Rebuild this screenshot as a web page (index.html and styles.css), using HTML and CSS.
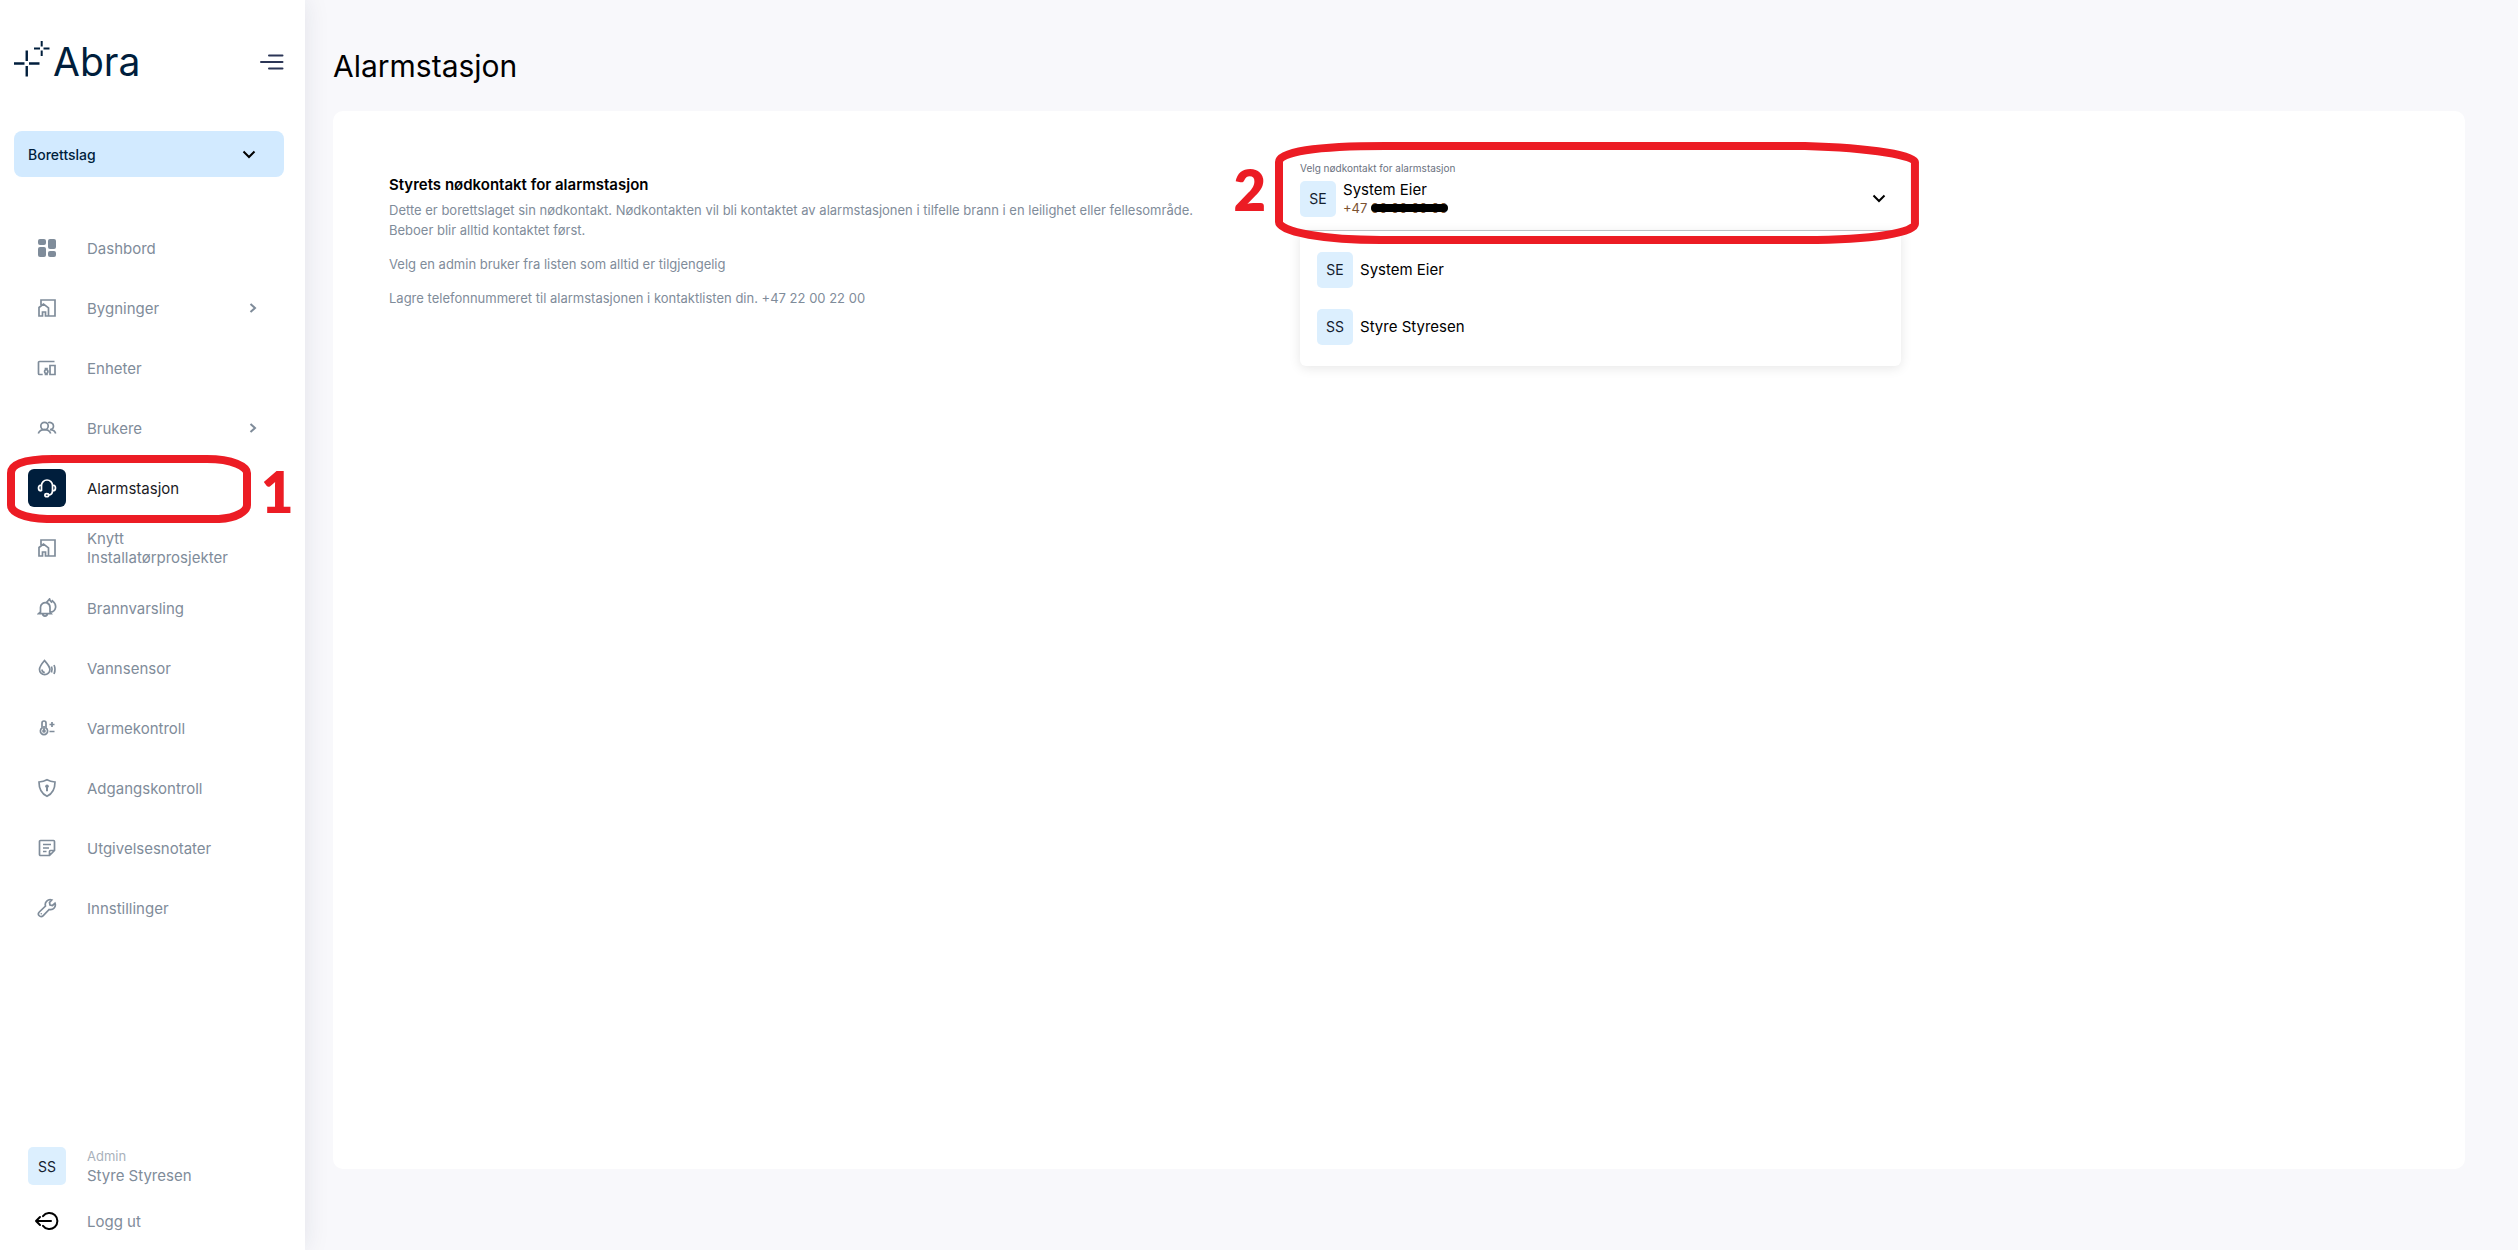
FILE: index.html
```html
<!DOCTYPE html>
<html lang="nb">
<head>
<meta charset="utf-8">
<meta name="viewport" content="width=device-width, initial-scale=1">
<title>Abra – Alarmstasjon</title>
<link rel="stylesheet" href="styles.css">
</head>
<body>
<div class="app">
  <aside class="sidebar">
    <header class="brand">
      <a class="logo" href="#">
        <svg class="logo-mark" viewBox="0 0 36 36" aria-hidden="true"><path d="M0 22.500h10.500M15 22.500h10.500M12.750 9.500v10.500M12.750 25v10.500" stroke-width="2.400"/><path d="M20 7.500h6M29.500 7.500h6M27.700 0v5.500M27.700 9.500v5.500" stroke-width="2"/></svg>
        <span class="logo-text">Abra</span>
      </a>
      <button class="menu-toggle" type="button" aria-label="Meny">
        <svg width="24" height="18" viewBox="0 0 24 18"><path d="M9 2.500h13.500M1 9h21.500M9 15.500h13.500"/></svg>
      </button>
    </header>

    <label class="org">
      <select class="org-select" aria-label="Organisasjon"><option>Borettslag</option></select>
      <svg class="org-chevron" width="14" height="9" viewBox="0 0 14 9"><path d="M1.500 1.500 7 7l5.500-5.500"/></svg>
    </label>

    <nav class="nav">
      <a class="nav-item" href="#"><span class="nav-icon"><svg viewBox="0 0 20 20"><g class="solid"><rect x="1" y="1" width="8" height="6" rx="2"/><rect x="11" y="1" width="8" height="10" rx="2"/><rect x="1" y="9" width="8" height="10" rx="2"/><rect x="11" y="13" width="8" height="6" rx="2"/></g></svg></span><span class="nav-label">Dashbord</span></a>
      <a class="nav-item" href="#"><span class="nav-icon"><svg viewBox="0 0 20 20"><path d="M4 7V2h14v16h-6.500M2 9.500 6.500 6l5 3.800V18H8.500v-4h-3v4H2z"/></svg></span><span class="nav-label">Bygninger</span><svg class="nav-chevron" viewBox="0 0 8 10"><path d="M1.500 1 6 5 1.500 9"/></svg></a>
      <a class="nav-item" href="#"><span class="nav-icon"><svg viewBox="0 0 20 20"><path d="M17.500 3.500H2.500a1 1 0 0 0-1 1v11a1 1 0 0 0 1 1h3.200M13 7.500h5v9h-5zM8.500 10.500h1.500v1.200a2.200 2.200 0 0 1 0 3.600v1.200H8.500v-1.200a2.200 2.200 0 0 1 0-3.600z"/></svg></span><span class="nav-label">Enheter</span></a>
      <a class="nav-item" href="#"><span class="nav-icon"><svg viewBox="0 0 20 20"><circle cx="7.500" cy="8" r="3.700"/><path d="M1.300 15.500c1-2.500 3-3.800 6.200-3.800s5.200 1.300 6.200 3.800M11 4.800c2.500-1 5.500.5 5.500 3.200 0 2-1.500 3.500-3.500 3.700 2.800 0 4.800 1.300 5.700 3.800"/></svg></span><span class="nav-label">Brukere</span><svg class="nav-chevron" viewBox="0 0 8 10"><path d="M1.500 1 6 5 1.500 9"/></svg></a>
      <a class="nav-item is-active" href="#" aria-current="page"><span class="nav-icon"><svg viewBox="0 0 20 20"><path d="M4.500 13V7.500a5.500 5.500 0 0 1 11 0v5c0 3-1.500 4.500-4 4.500M4.500 7C2.500 7 1.500 8.200 1.500 10s1 3 3 3M15.500 7c2 0 3 1.200 3 3s-1 3-3 3"/><ellipse cx="9.800" cy="17.200" rx="1.900" ry="1.500"/></svg></span><span class="nav-label">Alarmstasjon</span>
        <svg class="mark-ring mark-ring-nav" viewBox="0 0 244 68" preserveAspectRatio="none" aria-hidden="true"><path d="M4 18C4 10 14 4 46 4H200C226 4 240 12 240 18V50C240 56 230 63 212 64H40C16 63 4 57 4 50Z"/></svg>
        <span class="mark-number mark-number-nav">1</span></a>
      <a class="nav-item" href="#"><span class="nav-icon"><svg viewBox="0 0 20 20"><path d="M4 7V2h14v16h-6.500M2 9.500 6.500 6l5 3.800V18H8.500v-4h-3v4H2z"/></svg></span><span class="nav-label">Knytt Installatørprosjekter</span></a>
      <a class="nav-item" href="#"><span class="nav-icon"><svg viewBox="0 0 20 20"><path d="M3.500 14V9.500a4.800 4.800 0 0 1 6.500-4.600c2 .8 3 2.500 3 4.600V14l1.200 1.600H1.700zM5.700 15.800a2.300 2.300 0 0 0 4.600 0M9.500 4.500 12.500 1c.3 1.500 1 2.200 2 3l1-1.200c2.500 2 3.500 4.500 3 7-.4 2.500-2 3.800-5 4.400"/></svg></span><span class="nav-label">Brannvarsling</span></a>
      <a class="nav-item" href="#"><span class="nav-icon"><svg viewBox="0 0 20 20"><path d="M7.500 2.500C4.500 6 2.500 8.500 2.500 11.500a5.200 5.200 0 0 0 10.400 0c0-3-2.300-5.500-5.400-9zM5 11.500c0 1.700 1 2.800 2.800 3M14.500 8.500c.8 1.700.8 4 0 6M17 7c1.300 2.700 1.300 6 0 9"/></svg></span><span class="nav-label">Vannsensor</span></a>
      <a class="nav-item" href="#"><span class="nav-icon"><svg viewBox="0 0 20 20"><path d="M5 10V5a2 2 0 0 1 4 0v5a3.600 3.600 0 1 1-4 0zM7 8v4M12.500 6.500h5M15 4v5M12.500 13.500h5"/><circle cx="7" cy="13" r="1"/></svg></span><span class="nav-label">Varmekontroll</span></a>
      <a class="nav-item" href="#"><span class="nav-icon"><svg viewBox="0 0 20 20"><path d="M10 1.800c2.500 1.400 5 2 8 2.200 0 7-2 11.500-8 14.300C4 15.500 2 11 2 4c3-.2 5.500-.8 8-2.200z"/><circle class="solid" cx="10" cy="8.300" r="1.800"/><path d="M10 8.500v4.700" stroke-width="2"/></svg></span><span class="nav-label">Adgangskontroll</span></a>
      <a class="nav-item" href="#"><span class="nav-icon"><svg viewBox="0 0 20 20"><path d="M12.500 17.500h-9a1 1 0 0 1-1-1v-13a1 1 0 0 1 1-1h13a1 1 0 0 1 1 1v9zM17.500 12.500h-4a1 1 0 0 0-1 1v4M6 6.500h8M6 10h6M6 13.500h3.500"/></svg></span><span class="nav-label">Utgivelsesnotater</span></a>
      <a class="nav-item" href="#"><span class="nav-icon"><svg viewBox="0 0 20 20"><path d="M14.800 2 12.500 4.500l.5 2.500 2.500.5L18 5.200c1.300 3.500-1.500 7.300-5.800 6.300L6 17.800A2.400 2.400 0 0 1 2.300 14L8.500 8C7.300 4 11 .8 14.800 2z"/><circle class="solid" cx="4.300" cy="15.800" r=".8"/></svg></span><span class="nav-label">Innstillinger</span></a>
    </nav>

    <footer class="account">
      <div class="user">
        <span class="avatar avatar-user">SS</span>
        <div class="user-text"><span class="user-role">Admin</span><span class="user-name">Styre Styresen</span></div>
      </div>
      <button class="logout" type="button">
        <svg viewBox="0 0 26 20" aria-hidden="true"><path d="M9 5.200a8 8 0 1 1 0 9.600M2 10h15M6 6l-4 4 4 4"/></svg>
        <span>Logg ut</span>
      </button>
    </footer>
  </aside>

  <main class="main">
    <h1 class="page-title">Alarmstasjon</h1>
    <section class="card">
      <div class="info">
        <h2 class="info-title">Styrets nødkontakt for alarmstasjon</h2>
        <p>Dette er borettslaget sin nødkontakt. Nødkontakten vil bli kontaktet av alarmstasjonen i tilfelle brann i en leilighet eller fellesområde.<br>Beboer blir alltid kontaktet først.</p>
        <p>Velg en admin bruker fra listen som alltid er tilgjengelig</p>
        <p>Lagre telefonnummeret til alarmstasjonen i kontaktlisten din. +47 22 00 22 00</p>
      </div>
      <div class="field">
        <label class="field-label" for="contact">Velg nødkontakt for alarmstasjon</label>
        <button class="picker" id="contact" type="button" aria-haspopup="listbox" aria-expanded="true">
          <span class="avatar">SE</span>
          <span class="picker-text"><span class="picker-name">System Eier</span><span class="picker-phone">+47 <span class="redacted">00 00 00 00</span></span></span>
          <svg class="picker-chevron" width="14" height="9" viewBox="0 0 14 9"><path d="M1.500 1.500 7 7l5.500-5.500"/></svg>
        </button>
        <div class="options" role="listbox" aria-label="Nødkontakt">
          <button class="option" type="button" role="option" aria-selected="true"><span class="avatar">SE</span><span>System Eier</span></button>
          <button class="option" type="button" role="option" aria-selected="false"><span class="avatar">SS</span><span>Styre Styresen</span></button>
        </div>
        <svg class="mark-ring mark-ring-field" viewBox="0 0 644 102" preserveAspectRatio="none" aria-hidden="true"><path d="M4 20C4 10 40 4 110 4H530C600 6 640 14 640 20V82C640 90 600 98 530 98H106C50 98 4 90 4 80Z"/></svg>
        <span class="mark-number mark-number-field">2</span>
      </div>
    </section>
  </main>
</div>
</body>
</html>
```
FILE: styles.css
```css
*,
*::before,
*::after {
  box-sizing: border-box;
}

body {
  margin: 0;
  background: #f8f8fb;
  color: #000;
  font: 400 15px/19px Inter, "Liberation Sans", sans-serif;
}

a {
  color: inherit;
  text-decoration: none;
}

button,
select {
  padding: 0;
  border: 0;
  background: none;
  color: inherit;
  font: inherit;
  text-align: left;
  cursor: pointer;
}

svg {
  flex: none;
  fill: none;
  stroke: currentColor;
  stroke-width: 2;
}

.app {
  display: flex;
  min-height: 100vh;
}

/* Sidebar */
.sidebar {
  position: relative;
  z-index: 1;
  display: flex;
  flex: none;
  flex-direction: column;
  width: 305px;
  padding: 39px 21px 10px 14px;
  background: #fff;
  box-shadow: 0 0 24px rgba(30, 40, 80, 0.1);
  color: #7f8c9a;
}

.brand {
  display: flex;
  align-items: center;
  justify-content: space-between;
  height: 46px;
  color: #001e3c;
}

.logo {
  display: flex;
  align-items: center;
  gap: 3px;
}

.logo-mark {
  width: 36px;
  height: 36px;
  margin-bottom: 6px;
}

.logo-text {
  font-size: 39px;
  line-height: 46px;
}

.menu-toggle {
  height: 18px;
}

.menu-toggle svg {
  display: block;
  stroke: #2b3556;
  stroke-linecap: round;
}

.org {
  position: relative;
  display: block;
  margin-top: 46px;
}

.org-select {
  width: 100%;
  height: 46px;
  padding-left: 14px;
  border-radius: 8px;
  appearance: none;
  background: #d2eaff;
  color: #001e3c;
  font-size: 14px;
  font-weight: 500;
}

.org-chevron {
  position: absolute;
  top: 19px;
  right: 28px;
  stroke: #000;
  pointer-events: none;
}

.nav {
  margin-top: 41px;
}

.nav-item {
  position: relative;
  display: flex;
  align-items: center;
  height: 60px;
  padding: 0 27px 0 14px;
}

.nav-icon {
  display: grid;
  flex: none;
  width: 38px;
  height: 38px;
  margin-right: 21px;
  border-radius: 6px;
  place-items: center;
}

.nav-icon svg {
  width: 20px;
  height: 20px;
  stroke-width: 1.7;
}

.solid {
  fill: currentColor;
  stroke: none;
}

.nav-label {
  flex: 1;
}

.nav-chevron {
  width: 8px;
  height: 10px;
}

.is-active {
  color: #1b1b1f;
}

.is-active .nav-icon {
  background: #001e3c;
  color: #fff;
}

.account {
  display: flex;
  flex-direction: column;
  gap: 17px;
  margin-top: auto;
  padding-left: 14px;
}

.user,
.logout {
  display: flex;
  align-items: center;
  height: 38px;
  gap: 21px;
}

.user-text {
  display: flex;
  flex-direction: column;
}

.user-role {
  color: #a9b1bb;
  font-size: 13px;
}

.logout svg {
  width: 26px;
  height: 20px;
  margin: 0 6px;
  stroke: #000;
  stroke-linecap: round;
  stroke-linejoin: round;
}

.avatar {
  display: grid;
  flex: none;
  width: 36px;
  height: 36px;
  border-radius: 5px;
  background: #dceffe;
  color: #14202e;
  font-size: 14px;
  place-items: center;
}

.avatar-user {
  width: 38px;
  height: 38px;
}

/* Page */
.main {
  display: flex;
  flex: 1;
  flex-direction: column;
  padding: 48px 53px 81px 28px;
}

.page-title {
  margin: 0 0 27px;
  font-size: 30px;
  font-weight: 400;
  line-height: 36px;
}

.card {
  display: grid;
  flex: 1;
  grid-template-columns: 45.1% 29.75%;
  align-items: start;
  padding: 50px 56px;
  border-radius: 10px;
  background: #fff;
}

.info {
  padding-top: 14px;
  color: #7f8c9a;
  font-size: 13px;
  line-height: 20px;
}

.info-title {
  margin: 0 0 5px;
  color: #000;
  font-size: 15px;
  font-weight: 600;
}

.info p {
  margin: 0 0 14px;
}

.field {
  position: relative;
}

.field-label {
  display: block;
  color: #6b7280;
  font-size: 10px;
  line-height: 14px;
}

.picker {
  display: flex;
  align-items: center;
  width: 100%;
  height: 56px;
  padding: 0 15px 8px 0;
  gap: 7px;
  border-bottom: 1px solid #c4c8cc;
}

.picker-text {
  display: flex;
  flex: 1;
  flex-direction: column;
}

.picker-phone {
  color: #7b5230;
  font-size: 13px;
}

.redacted {
  position: relative;
}

.redacted::after {
  position: absolute;
  top: 4px;
  right: 0;
  left: 0;
  height: 8px;
  border-radius: 4px;
  background: #000;
  content: "";
}

.picker-chevron {
  stroke: #000;
}

.options {
  padding: 10px 17px 11px;
  border-radius: 0 0 6px 6px;
  background: #fff;
  box-shadow: 0 2px 12px rgba(0, 0, 0, 0.1);
}

.option {
  display: flex;
  align-items: center;
  width: 100%;
  height: 57px;
  gap: 7px;
}

/* Step markers */
.mark-ring,
.mark-number {
  position: absolute;
  color: #ec1c24;
  pointer-events: none;
}

.mark-ring path {
  stroke-width: 8;
  vector-effect: non-scaling-stroke;
}

.mark-ring-nav {
  top: -3px;
  left: -7px;
  width: 244px;
  height: 68px;
}

.mark-ring-field {
  top: -19px;
  left: -25px;
  width: calc(100% + 43px);
  height: 102px;
}

.mark-number {
  font: 800 56px/56px Lato, sans-serif;
}

.mark-number-nav {
  top: 6px;
  left: 247px;
}

.mark-number-field {
  top: 1px;
  right: calc(100% + 34px);
}
```
